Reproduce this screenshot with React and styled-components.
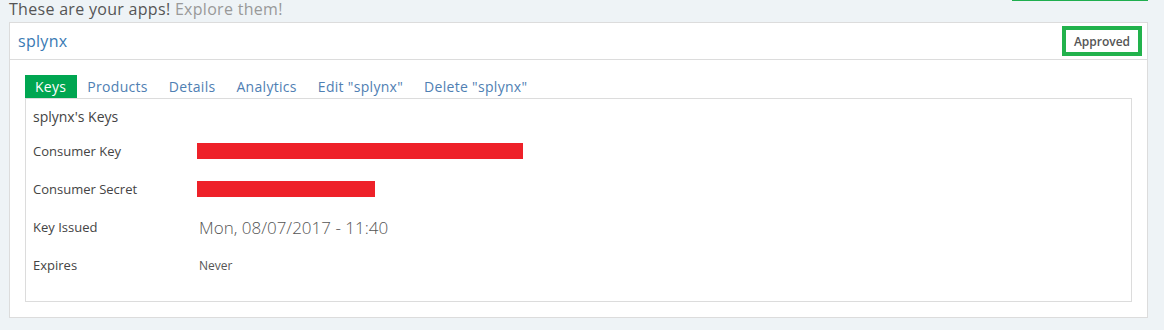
import React from 'react';
import styled, { createGlobalStyle } from 'styled-components';

const GlobalStyle = createGlobalStyle`
  body {
    margin: 0;
    background: #eef3f6;
    font-family: "Open Sans", "DejaVu Sans", sans-serif;
    color: #444;
  }
`;

const Page = styled.div`
  padding: 0 16px 12px 9px;
`;

const TopBar = styled.div`
  display: flex;
  justify-content: space-between;
  align-items: flex-start;
  height: 22px;
`;

const Title = styled.div`
  font-size: 16px;
  line-height: 22px;
  letter-spacing: 0.3px;
  color: #555;
  margin-top: -2px;

  span {
    color: #999;
  }
`;

const TopButton = styled.div`
  width: 136px;
  height: 30px;
  margin-top: -29px;
  background: #1fae4f;
`;

const Card = styled.div`
  border: 1px solid #dcdcdc;
  background: #fff;
`;

const CardHeader = styled.div`
  height: 36px;
  display: flex;
  align-items: center;
  justify-content: space-between;
  padding: 0 5px 0 8px;
  border-bottom: 1px solid #dcdcdc;
`;

const AppName = styled.div`
  font-size: 16px;
  letter-spacing: 0.3px;
  color: #3a7ab4;
`;

const Badge = styled.div`
  box-sizing: border-box;
  width: 80px;
  height: 30px;
  border: 4px solid #22b24c;
  display: flex;
  align-items: center;
  justify-content: center;
  font-size: 12px;
  font-weight: 600;
  color: #555;
`;

const CardBody = styled.div`
  padding: 15px;
`;

const Tabs = styled.div`
  display: flex;
  height: 23px;
`;

const Tab = styled.div`
  padding: 0 11px 0 10px;
  font-size: 14px;
  line-height: 23px;
  letter-spacing: 0.3px;
  color: ${(p) => (p.$active ? '#fff' : '#4f80b3')};
  background: ${(p) => (p.$active ? '#00a651' : 'transparent')};
`;

const Panel = styled.div`
  border: 1px solid #dcdcdc;
  padding: 8px 7px 17px;
`;

const Heading = styled.div`
  font-size: 14px;
  line-height: 20px;
  color: #444;
`;

const Rows = styled.div`
  margin-top: 5px;
  display: grid;
  grid-template-columns: 164px 1fr;
  grid-auto-rows: 38px;
  align-items: center;
`;

const Label = styled.div`
  font-size: 13px;
  color: #444;
`;

const Redacted = styled.div`
  height: 16px;
  width: ${(p) => p.$w}px;
  background: #ee2129;
`;

const Value = styled.div`
  padding-left: 2px;
  font-size: ${(p) => (p.$big ? '17px' : '12px')};
  font-weight: ${(p) => (p.$big ? 300 : 400)};
  color: #555;
`;

export default function App() {
  return (
    <>
      <GlobalStyle />
      <Page>
        <TopBar>
          <Title>
            These are your apps! <span>Explore them!</span>
          </Title>
          <TopButton />
        </TopBar>
        <Card>
          <CardHeader>
            <AppName>splynx</AppName>
            <Badge>Approved</Badge>
          </CardHeader>
          <CardBody>
            <Tabs>
              <Tab $active>Keys</Tab>
              <Tab>Products</Tab>
              <Tab>Details</Tab>
              <Tab>Analytics</Tab>
              <Tab>Edit "splynx"</Tab>
              <Tab>Delete "splynx"</Tab>
            </Tabs>
            <Panel>
              <Heading>splynx's Keys</Heading>
              <Rows>
                <Label>Consumer Key</Label>
                <Redacted $w={326} />
                <Label>Consumer Secret</Label>
                <Redacted $w={178} />
                <Label>Key Issued</Label>
                <Value $big>Mon, 08/07/2017 - 11:40</Value>
                <Label>Expires</Label>
                <Value>Never</Value>
              </Rows>
            </Panel>
          </CardBody>
        </Card>
      </Page>
    </>
  );
}
